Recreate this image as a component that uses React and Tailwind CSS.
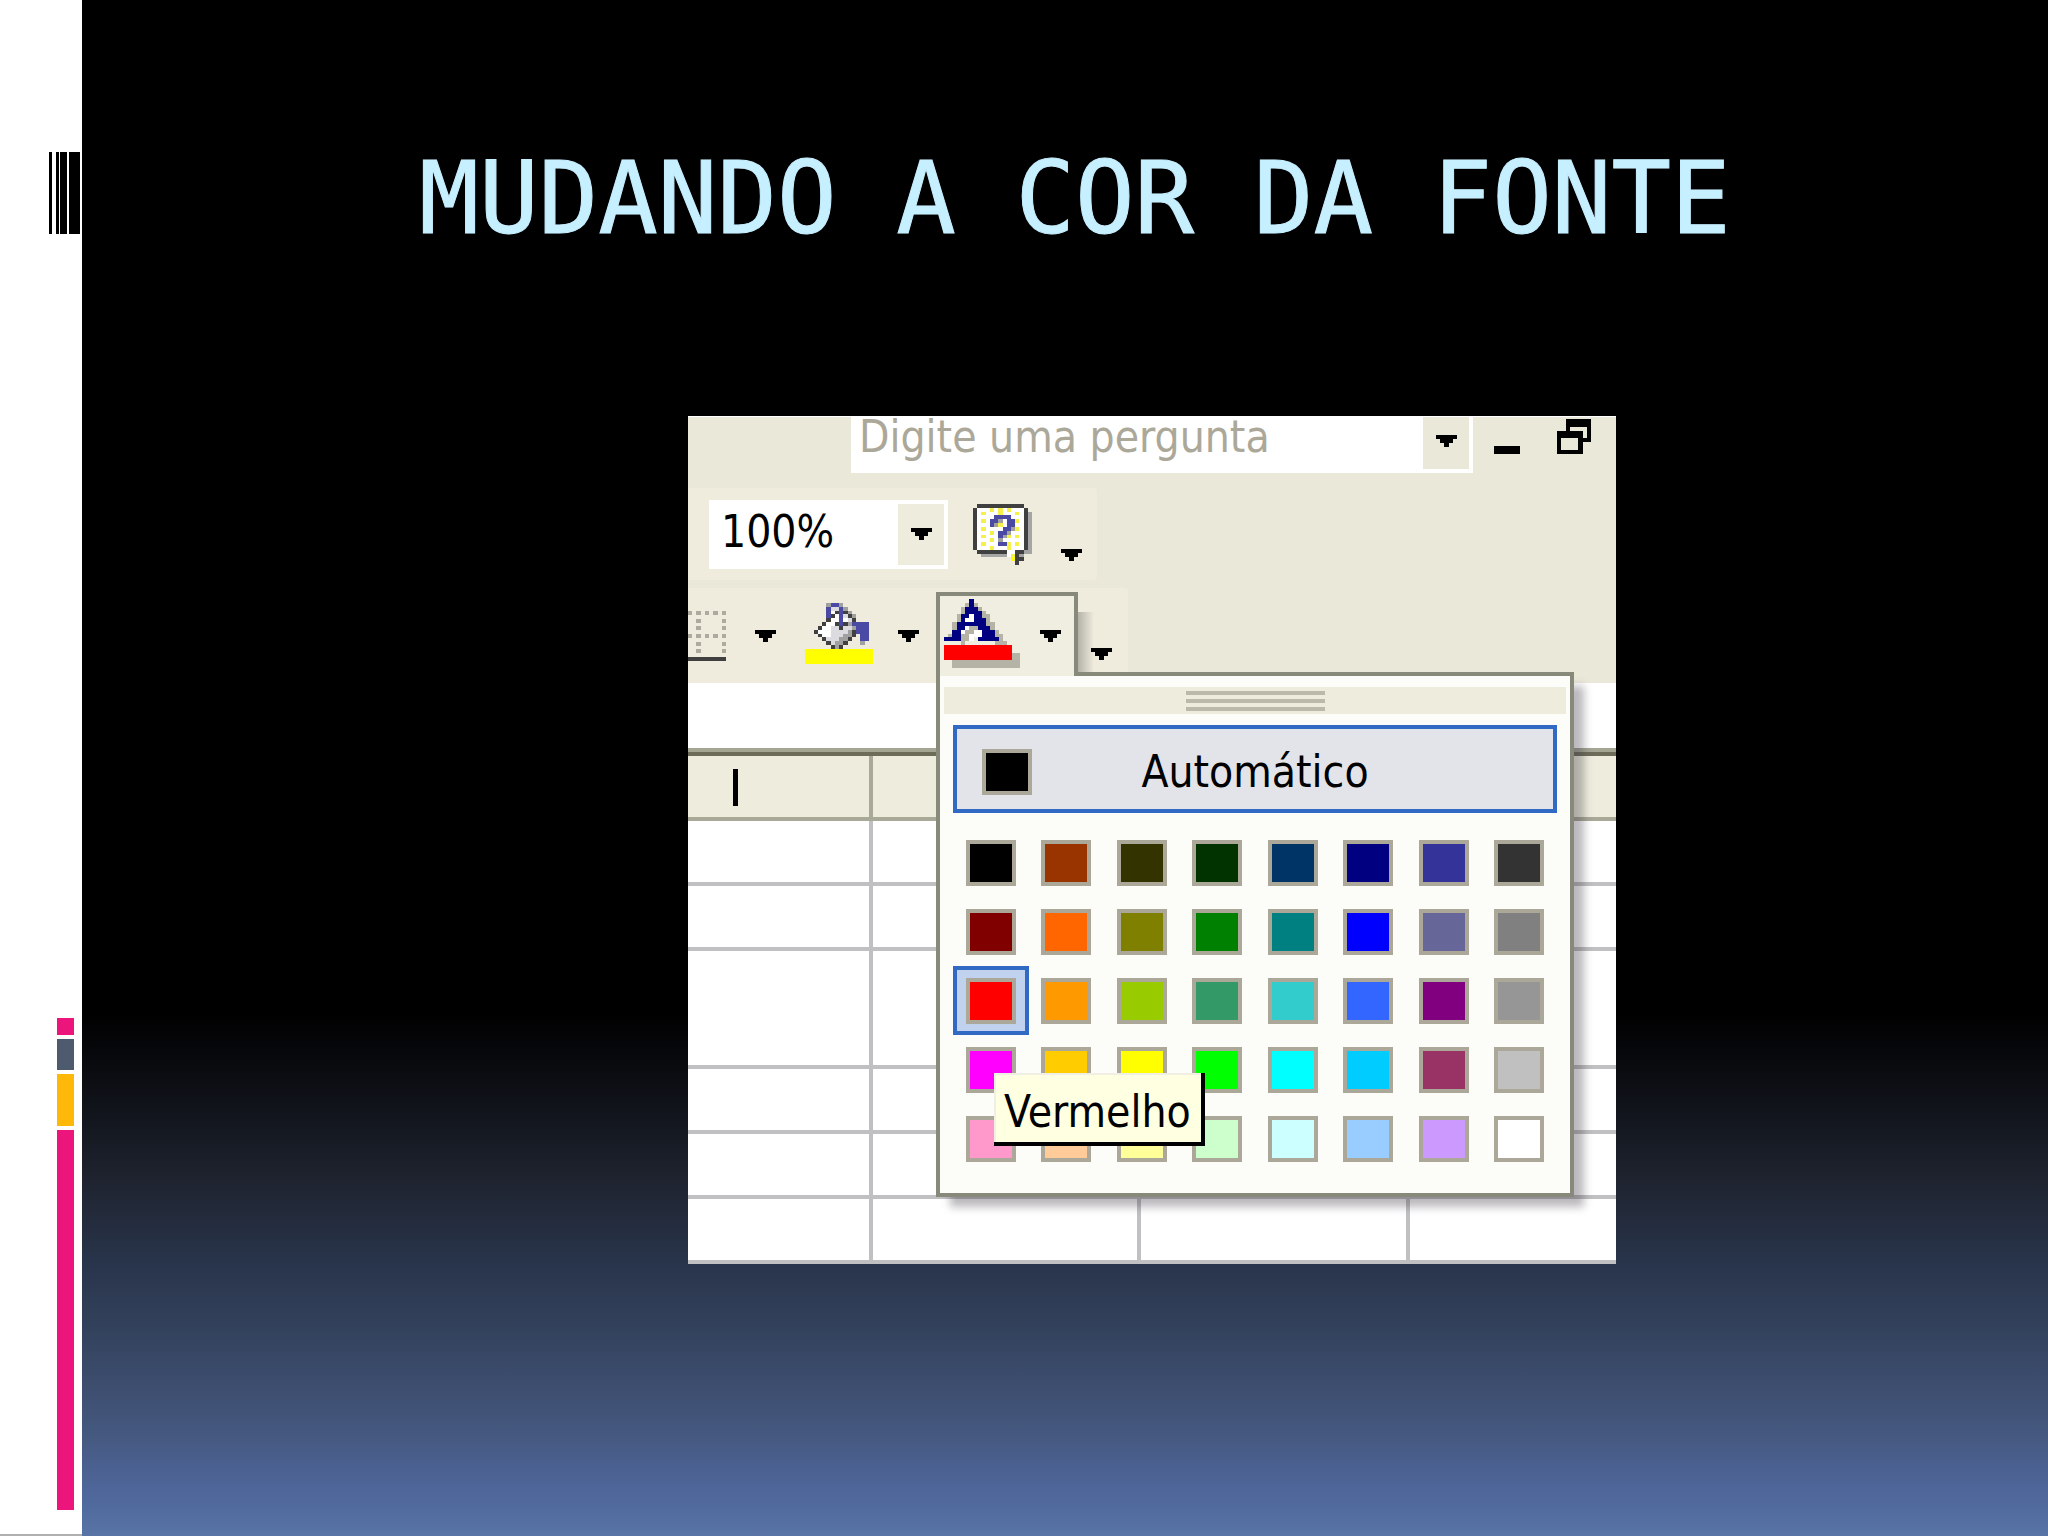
import React, { useState } from 'react';
import clsx from 'clsx';

const PALETTE = [
  ['#000000', '#993300', '#333300', '#003300', '#003366', '#000080', '#333399', '#333333'],
  ['#800000', '#ff6600', '#808000', '#008000', '#008080', '#0000ff', '#666699', '#808080'],
  ['#ff0000', '#ff9900', '#99cc00', '#339966', '#33cccc', '#3366ff', '#800080', '#969696'],
  ['#ff00ff', '#ffcc00', '#ffff00', '#00ff00', '#00ffff', '#00ccff', '#993366', '#c0c0c0'],
  ['#ff99cc', '#ffcc99', '#ffff99', '#ccffcc', '#ccffff', '#99ccff', '#cc99ff', '#ffffff'],
];

const SHEET_ROWS = ['h-[65px]', 'h-[65px]', 'h-[118px]', 'h-[65px]', 'h-[65px]', 'h-[65px]'];

// One letter per pixel, '.' is transparent
const INK = {
  K: '#404040',
  X: '#000000',
  W: '#ffffff',
  L: '#dcdce0',
  G: '#a0a0a0',
  S: '#a5a5a5',
  Y: '#ffff00',
  P: '#f6f04a',
  B: '#4a4aa5',
  N: '#000080',
  R: '#ff0000',
  H: '#b5b3a6',
  D: '#adab9f',
};

const ARROW = ['XXXXX', '.XXX.', '..X..'];

const MINIMIZE = ['XXXXXX', 'XXXXXX'];

const RESTORE = [
  '..XXXXXX',
  '..XXXXXX',
  '..X....X',
  'XXXXXX.X',
  'XXXXXX.X',
  'X....XXX',
  'X....X..',
  'X....X..',
  'XXXXXX..',
];

const HELP = [
  '.KKKKKKKKKKK..',
  'KWWWPWPWPWWWK.',
  'KWPWWWPWWWPWKS',
  'KWWWWBBBBWWWKS',
  'KWPWBBGWBBPWKS',
  'KWWWBGPWBBWWKS',
  'KWPWWWWBBGPWKS',
  'KWWWPWBBGWWWKS',
  'KWPWWWBGPWPWKS',
  'KWWWPWGWWWWWKS',
  'KWPWWWBBPWPWKS',
  'KWWWPWWWPWWWKS',
  '.KKKKKKKWWKKSS',
  '..SSSSSSWPKS..',
  '.........YKK..',
  '..........K...',
];

const BUCKET = [
  '.....GBBG.......',
  '.....BLLBG......',
  '.....BWKBKG.....',
  '.....BKWBLKG....',
  '.....KWWBWLK....',
  '....KWWKBKGBBBB.',
  '...KWWLLKLLGBBB.',
  '..KWWWLLLLGKBBB.',
  '...KWWLLLGGK.BB.',
  '....KLLLGGK..BB.',
  '.....KLGGK...G..',
  '......KGK.......',
  'YYYYYYYYYYYYYYYY',
  'YYYYYYYYYYYYYYYY',
  'YYYYYYYYYYYYYYYY',
  'YYYYYYYYYYYYYYYY',
];

const FONT_COLOR = [
  '......N...........',
  '.....HNH..........',
  '....HNNNH.........',
  '....HNNNNH........',
  '...HNNWNNHH.......',
  '...HNWWNNNH.......',
  '..HNNNNNNNHH......',
  '..HNNWHHNNNH......',
  '..NNWHHWWNNNH.....',
  '.HNNHHWWWNNNHH....',
  'NNNNHHW.NNNNNH....',
  '....H.......HHH...',
  'RRRRRRRRRRRRRRRR..',
  'RRRRRRRRRRRRRRRR..',
  'RRRRRRRRRRRRRRRRHH',
  'RRRRRRRRRRRRRRRRHH',
  '..HHHHHHHHHHHHHHHH',
  '..HHHHHHHHHHHHHHHH',
];

const BORDERS = [
  'D.D.D.D.D',
  '.........',
  '..D.....D',
  '.........',
  '..D.....D',
  '.........',
  'D.D.D.D.D',
  '.........',
  '..D.....D',
  '.........',
  '..D.....D',
  '.........',
  'KKKKKKKKK',
];

function PixelArt({ rows, className }) {
  return (
    <svg
      viewBox={`0 0 ${rows[0].length} ${rows.length}`}
      preserveAspectRatio="none"
      shapeRendering="crispEdges"
      className={clsx('block shrink-0', className)}
      aria-hidden="true"
    >
      {rows.flatMap((row, y) =>
        [...row].map((c, x) =>
          c === '.' ? null : <rect key={`${x}-${y}`} x={x} y={y} width="1" height="1" fill={INK[c]} />
        )
      )}
    </svg>
  );
}

function Arrow() {
  return <PixelArt rows={ARROW} className="w-[21px] h-3" />;
}

function Sidebar() {
  return (
    <aside className="flex w-[82px] shrink-0 flex-col border-b-2 border-[#b0b0b0] bg-white pt-[152px] pb-6">
      <div className="flex h-[82px] justify-end pr-[2px]">
        <div className="mr-1 w-[3px] bg-black" />
        <div className="mr-px w-[3px] bg-black" />
        <div className="mr-[2px] w-[7px] bg-black" />
        <div className="w-[11px] bg-black" />
      </div>
      <div className="mt-auto flex flex-col items-end gap-1 pr-2">
        <div className="h-[17px] w-[17px] bg-[#eb157b]" />
        <div className="h-[31px] w-[17px] bg-[#4e5b6f]" />
        <div className="h-[52px] w-[17px] bg-[#feb80a]" />
        <div className="h-[380px] w-[17px] bg-[#eb157b]" />
      </div>
    </aside>
  );
}

function Swatch({ color }) {
  return (
    <span
      className="block h-[46px] w-[50px] border-4 border-[#aca899]"
      style={{ backgroundColor: color }}
    />
  );
}

function ColorMenu({ selected, onSelect }) {
  return (
    <div className="absolute top-20 left-0 w-[638px] border-4 border-[#878a7b] bg-[#fcfcf8] pb-5 shadow-[12px_12px_8px_-2px_rgba(60,55,65,0.35)]">
      <div className="mx-1 mt-[11px] flex h-[27px] flex-col items-center justify-center gap-1 bg-[#eeeddd]">
        <div className="h-1 w-[139px] bg-[#b9baa8]" />
        <div className="h-1 w-[139px] bg-[#b9baa8]" />
        <div className="h-1 w-[139px] bg-[#b9baa8]" />
      </div>
      <div className="mx-[13px] mt-[11px]">
        <button
          type="button"
          className="relative flex h-[88px] w-full items-center justify-center border-4 border-[#316ac5] bg-[#e3e4e9] pt-1.5 text-[44px] leading-none"
          onClick={() => onSelect('#000000')}
        >
          <span className="absolute left-[25px]">
            <Swatch color="#000000" />
          </span>
          Automático
        </button>
        <div className="relative mt-[15px] grid grid-cols-8">
          {PALETTE.flat().map(color => (
            <button
              key={color}
              type="button"
              aria-label={color}
              onClick={() => onSelect(color)}
              className={clsx(
                'flex h-[69px] items-center justify-center border-4',
                color === selected ? 'border-[#316ac5] bg-[#c1d2ee]' : 'border-transparent'
              )}
            >
              <Swatch color={color} />
            </button>
          ))}
          <div
            role="tooltip"
            className="absolute top-[245px] left-[41px] h-[73px] border-r-4 border-b-4 border-black bg-[#ffffe1] px-2.5 pt-1.5 text-[44px] leading-[65px] shadow-[inset_2px_2px_0_#f1eee4]"
          >
            Vermelho
          </div>
        </div>
      </div>
    </div>
  );
}

function Sheet() {
  return (
    <table className="w-full table-fixed border-separate border-spacing-0 bg-white">
      <colgroup>
        <col className="w-[185px]" />
        <col className="w-[268px]" />
        <col className="w-[269px]" />
        <col />
      </colgroup>
      <thead>
        <tr className="h-[65px] bg-[#eeeddd]">
          <th
            scope="col"
            className="border-r-4 border-b-4 border-[#a9a998] p-0 pl-10 text-left font-['Liberation_Sans',sans-serif] text-[54px] leading-[56px] font-normal"
          >
            I
          </th>
          <td className="border-r-4 border-b-4 border-[#a9a998] p-0" />
          <td className="border-r-4 border-b-4 border-[#a9a998] p-0" />
          <td className="border-b-4 border-[#a9a998] p-0" />
        </tr>
      </thead>
      <tbody>
        {SHEET_ROWS.map((height, i) => (
          <tr key={i} className={height}>
            <td className="border-r-4 border-b-4 border-[#c0bfc2] p-0" />
            <td className="border-r-4 border-b-4 border-[#c0bfc2] p-0" />
            <td className="border-r-4 border-b-4 border-[#c0bfc2] p-0" />
            <td className="border-b-4 border-[#c0bfc2] p-0" />
          </tr>
        ))}
      </tbody>
    </table>
  );
}

function ExcelWindow() {
  const [color, setColor] = useState('#ff0000');

  return (
    <section className="w-[928px] border-t border-white bg-[#eae8d9] font-['DejaVu_Sans_Condensed','DejaVu_Sans',sans-serif] text-black">
      {/* Menu bar */}
      <div className="flex h-[71px] items-start pl-[163px]">
        <div className="flex h-14 w-[622px] items-start bg-white pr-1">
          <input
            type="text"
            aria-label="Digite uma pergunta"
            placeholder="Digite uma pergunta"
            className="-mt-2 h-14 min-w-0 flex-1 pl-2 text-[44px] leading-14 placeholder-[#aca899] outline-none"
          />
          <button type="button" aria-label="Perguntas" className="flex h-[52px] w-[46px] items-center justify-center bg-[#eae8d9] pb-1">
            <Arrow />
          </button>
        </div>
        <div className="ml-[21px] flex h-[37px] items-end gap-[37px]">
          <button type="button" aria-label="Minimizar">
            <PixelArt rows={MINIMIZE} className="h-2 w-[26px]" />
          </button>
          <button type="button" aria-label="Restaurar">
            <PixelArt rows={RESTORE} className="h-[35px] w-[34px]" />
          </button>
        </div>
      </div>

      {/* Standard toolbar */}
      <div className="h-[100px]">
        <div className="flex h-[92px] w-[409px] items-center rounded-r bg-[#efecde] pl-[21px]">
          <div className="flex h-[69px] w-[239px] bg-white p-1">
            <input
              type="text"
              aria-label="Zoom"
              defaultValue="100%"
              className="min-w-0 flex-1 bg-transparent pb-1.5 pl-2 text-[44px] leading-none outline-none"
            />
            <button type="button" aria-label="Lista de zoom" className="flex w-[46px] items-center justify-center bg-[#eeeddd]">
              <Arrow />
            </button>
          </div>
          <button type="button" aria-label="Ajuda" className="ml-[25px]">
            <PixelArt rows={HELP} className="h-[61px] w-[59px]" />
          </button>
          <button type="button" aria-label="Mais botões" className="mb-[19px] ml-[29px] self-end">
            <Arrow />
          </button>
        </div>
      </div>

      {/* Formatting toolbar */}
      <div className="h-[95px]">
        <div className="flex h-full w-[440px] items-center rounded-tr bg-[#efecde]">
          <button type="button" aria-label="Bordas">
            <PixelArt rows={BORDERS} className="h-[50px] w-[38px]" />
          </button>
          <button type="button" aria-label="Opções de bordas" className="ml-[29px]">
            <Arrow />
          </button>
          <button type="button" aria-label="Cor do preenchimento" className="ml-[29px] pb-1">
            <PixelArt rows={BUCKET} className="h-[61px] w-[68px]" />
          </button>
          <button type="button" aria-label="Opções de preenchimento" className="ml-[25px]">
            <Arrow />
          </button>
          <div className="relative z-10 mt-1 ml-[17px] self-start">
            <button
              type="button"
              aria-label="Cor da fonte"
              className="relative z-10 flex h-[84px] w-[142px] items-start border-4 border-b-0 border-[#878a7b] bg-[#f0eee1] pt-[3px] pl-1"
            >
              <PixelArt rows={FONT_COLOR} className="h-[69px] w-[76px]" />
              <span className="mt-[31px] ml-5">
                <Arrow />
              </span>
            </button>
            <div className="absolute top-5 right-0 h-[60px] w-4 translate-x-full bg-linear-to-r from-[#b5b3a8] to-transparent" />
            <ColorMenu selected={color} onSelect={setColor} />
          </div>
          <button type="button" aria-label="Mais formatos" className="relative z-10 mb-[23px] ml-[13px] self-end">
            <Arrow />
          </button>
        </div>
      </div>

      <div className="h-[73px] border-b-4 border-[#6d6c58] bg-white">
        <div className="h-[69px] border-b-4 border-[#a5a593]" />
      </div>
      <Sheet />
    </section>
  );
}

export default function App() {
  return (
    <div className="flex min-h-screen bg-black">
      <Sidebar />
      <main className="flex flex-1 flex-col items-center bg-[linear-gradient(to_bottom,#000_0%,#000_66%,#10131a_72%,#1f2430_77%,#28344a_82%,#34435e_87%,#44577d_93%,#4e669a_97%,#5873a5_100%)] pt-[141px] pl-5">
        <h1 className="font-['DejaVu_Sans_Mono',monospace] text-[99px] leading-[116px] whitespace-nowrap text-[#c6efff] [-webkit-text-stroke:1px_#c6efff]">
          MUDANDO A COR DA FONTE
        </h1>
        <div className="mt-[159px] pl-[154px]">
          <ExcelWindow />
        </div>
      </main>
    </div>
  );
}
